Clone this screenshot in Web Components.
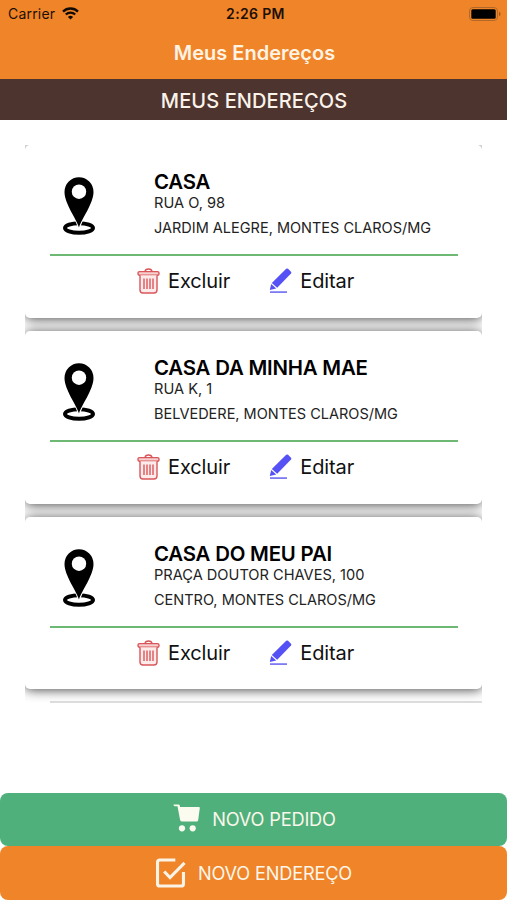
<!DOCTYPE html>
<html lang="pt-BR">
<head>
<meta charset="utf-8">
<title>Meus Endereços</title>
<style>
  body {
    margin: 0;
    background: #fff;
    font-family: Inter, "Liberation Sans", sans-serif;
  }
</style>
</head>
<body>
<address-app></address-app>

<script>
const templateStatusBar = document.createElement("template");
templateStatusBar.innerHTML = `
  <style>
    :host {
        display: grid;
        grid-template-columns: 1fr auto 1fr;
        align-items: center;
        height: 27px;
        padding: 0 6px 0 8px;
        font-size: 14px;
        line-height: 27px;
        color: #1c0f05;
    }
    .carrier {
        display: flex;
        align-items: center;
        gap: 7px;
        letter-spacing: 0.2px;
    }
    .time {
        padding-left: 2px;
        font-weight: 600;
        letter-spacing: 0.35px;
    }
    svg {
        display: block;
    }
    .battery {
        justify-self: end;
    }
  </style>
  <div class="carrier">
    <span>Carrier</span>
    <svg width="17" height="13" viewBox="0 0 17 13" fill="none" stroke="#120a03" stroke-width="2.3">
      <path d="M1 4.6a10.6 10.6 0 0 1 15 0"/>
      <path d="M3.8 7.5a6.7 6.7 0 0 1 9.4 0"/>
      <path d="M8.5 12.6L5.9 9.9a3.8 3.8 0 0 1 5.2 0z" fill="#120a03" stroke="none"/>
    </svg>
  </div>
  <span class="time">2:26 PM</span>
  <svg class="battery" width="32" height="14" viewBox="0 0 32 14">
    <rect x="0.5" y="0.5" width="28" height="13" rx="3.5" fill="none" stroke="#b0692b"/>
    <rect x="2.3" y="2.3" width="24.4" height="9.4" rx="1.5" fill="#000"/>
    <path d="M30 4.8q1.6 .6 1.6 2.2t-1.6 2.2z" fill="#9a5a24"/>
  </svg>
`;

class StatusBar extends HTMLElement {
  constructor() {
    super();
    this.attachShadow({ mode: "open" });
    this.shadowRoot.appendChild(templateStatusBar.content.cloneNode(true));
  }
}

const templateNavHeader = document.createElement("template");
templateNavHeader.innerHTML = `
  <style>
    :host {
        display: block;
        height: 79px;
        background: #f08428;
    }
    h1 {
        margin: 0;
        padding-left: 2px;
        font-size: 20px;
        font-weight: 600;
        line-height: 52px;
        text-align: center;
        color: #fff3e4;
    }
  </style>
  <status-bar></status-bar>
  <h1><slot></slot></h1>
`;

class NavHeader extends HTMLElement {
  constructor() {
    super();
    this.attachShadow({ mode: "open" });
    this.shadowRoot.appendChild(templateNavHeader.content.cloneNode(true));
  }
}

const templateSectionTitle = document.createElement("template");
templateSectionTitle.innerHTML = `
  <style>
    :host {
        display: block;
        height: 41px;
        background: #4e342e;
    }
    h2 {
        margin: 0;
        padding-left: 1px;
        font-size: 20px;
        font-weight: 550;
        line-height: 44px;
        letter-spacing: 0.1px;
        text-align: center;
        color: #fbf3ea;
    }
  </style>
  <h2><slot></slot></h2>
`;

class SectionTitle extends HTMLElement {
  constructor() {
    super();
    this.attachShadow({ mode: "open" });
    this.shadowRoot.appendChild(templateSectionTitle.content.cloneNode(true));
  }
}

const templateAddressCard = document.createElement("template");
templateAddressCard.innerHTML = `
  <style>
    :host {
        display: block;
        box-sizing: border-box;
        height: 172.6px;
        padding: 0 24px 0 25px;
        border-radius: 5px;
        background: #fff;
        box-shadow: 0 1px 12px rgba( 0, 0, 0, 0.72 );
        /* the shadow stops at the neighbouring cards */
        clip-path: inset(-13.2px 0);
    }
    .info {
        display: grid;
        grid-template-columns: 104px 1fr;
        box-sizing: border-box;
        height: 111px;
        padding-top: 26px;
        border-bottom: 2px solid #6db873;
    }
    .pin {
        display: block;
        margin: 5px 0 0 12px;
    }
    h3 {
        margin: 0;
        font-size: 20.4px;
        font-weight: 600;
        line-height: 22px;
        letter-spacing: -0.2px;
        color: #000;
        white-space: nowrap;
    }
    p {
        margin: 0;
        font-size: 14.6px;
        line-height: 20px;
        color: #222;
        white-space: nowrap;
    }
    p + p {
        margin-top: 5px;
        font-size: 14.5px;
    }
    .actions {
        display: flex;
        gap: 39px;
        padding: 11px 0 0 87px;
    }
    .action {
        display: flex;
        align-items: center;
        gap: 8px;
        font-size: 20px;
        line-height: 28px;
        letter-spacing: -0.1px;
        color: #111;
    }
    .action svg {
        display: block;
    }
  </style>
  <div class="info">
    <svg class="pin" width="34" height="60" viewBox="0 0 34 60">
      <ellipse cx="17" cy="52" rx="14" ry="4.800" fill="none" stroke="#000" stroke-width="4"/>
      <path d="M17 54L12 42h10z" fill="#fff"/>
      <path d="M17 51.500C14.500 43 2.500 27.500 2.500 16a14.500 14.800 0 0 1 29 0C31.500 27.500 19.500 43 17 51.500z"/>
      <circle cx="17" cy="15.700" r="7.200" fill="#fff"/>
    </svg>
    <div>
      <h3><slot name="name"></slot></h3>
      <p><slot name="street"></slot></p>
      <p><slot name="district"></slot></p>
    </div>
  </div>
  <div class="actions">
    <div class="action">
      <svg width="23" height="26" viewBox="0 0 23 26" fill="none" stroke="#d9575b" stroke-width="1.4">
        <path d="M8 3.600Q8.300 1 11.500 1t3.500 2.600"/>
        <rect x="1" y="3.600" width="21" height="3.600" rx="1.500" fill="#f6cfcf"/>
        <path d="M3 7.200V22q0 3 3 3h11q3 0 3-3V7.200" fill="#fdeaea"/>
        <path d="M7 10.500v10.500M10 10.500v10.500M13 10.500v10.500M16 10.500v10.500"/>
      </svg>
      <span>Excluir</span>
    </div>
    <div class="action">
      <svg width="23" height="26" viewBox="0 0 23 26" fill="#5551f5">
        <path d="M17.200 .8q1-.8 1.900 0l2.900 2.900q.8.900 0 1.800L8.200 19.800 2.800 15z"/>
        <path d="M2.200 16l5 4.600-6.400 1.400z"/>
        <rect x="1" y="23.200" width="17" height="1.800" fill="#7d7af2"/>
      </svg>
      <span>Editar</span>
    </div>
  </div>
`;

class AddressCard extends HTMLElement {
  constructor() {
    super();
    this.attachShadow({ mode: "open" });
    this.shadowRoot.appendChild(templateAddressCard.content.cloneNode(true));
  }
}

const templateAddressList = document.createElement("template");
templateAddressList.innerHTML = `
  <style>
    :host {
        display: flex;
        flex-direction: column;
        gap: 13.2px;
        box-sizing: border-box;
        height: 558px;
        margin: 25.2px 25px 0;
        overflow: hidden;
    }
    .end {
        flex: none;
        height: 2px;
        margin: -1.800px 0 0 25px;
        background: #dedede;
    }
    ::slotted(*) {
        flex: none;
    }
  </style>
  <slot></slot>
  <div class="end"></div>
`;

class AddressList extends HTMLElement {
  constructor() {
    super();
    this.attachShadow({ mode: "open" });
    this.shadowRoot.appendChild(templateAddressList.content.cloneNode(true));
  }
}

const templateBigButton = document.createElement("template");
templateBigButton.innerHTML = `
  <style>
    :host {
        display: flex;
        justify-content: center;
        align-items: center;
        gap: 12px;
        height: 53.7px;
        border-radius: 8px;
        background: var(--button-color);
        font-size: 18.200px;
        letter-spacing: -0.18px;
        color: #fbf6ea;
    }
  </style>
  <slot name="icon"></slot>
  <span><slot></slot></span>
`;

class BigButton extends HTMLElement {
  constructor() {
    super();
    this.attachShadow({ mode: "open" });
    this.shadowRoot.appendChild(templateBigButton.content.cloneNode(true));
  }
}

const templateAddressApp = document.createElement("template");
templateAddressApp.innerHTML = `
  <style>
    :host {
        display: flex;
        flex-direction: column;
        height: 900px;
        overflow: hidden;
    }
    footer {
        margin-top: auto;
    }
    .order {
        --button-color: #4fb07c;
    }
    .address {
        --button-color: #f08428;
    }
    svg {
        display: block;
    }
  </style>
  <nav-header>Meus Endereços</nav-header>
  <section-title>MEUS ENDEREÇOS</section-title>
  <address-list>
    <address-card>
      <span slot="name">CASA</span>
      <span slot="street">RUA O, 98</span>
      <span slot="district">JARDIM ALEGRE, MONTES CLAROS/MG</span>
    </address-card>
    <address-card>
      <span slot="name">CASA DA MINHA MAE</span>
      <span slot="street">RUA K, 1</span>
      <span slot="district">BELVEDERE, MONTES CLAROS/MG</span>
    </address-card>
    <address-card>
      <span slot="name">CASA DO MEU PAI</span>
      <span slot="street">PRAÇA DOUTOR CHAVES, 100</span>
      <span slot="district">CENTRO, MONTES CLAROS/MG</span>
    </address-card>
  </address-list>
  <footer>
    <big-button class="order">
      <svg slot="icon" width="29" height="30" viewBox="-1.500 1 29 30" fill="#fbfbef">
        <path d="M1 1.500h5.200q.8 0 1 .8l.4 1.700H26.500q.9 0 .8.900L25.700 17q-.2 1.500-1.600 1.500H9.200q-1.300 0-1.600-1.400L5 3.300H2.300Q1 3 1 1.500z"/>
        <circle cx="9.500" cy="25.300" r="3.100"/>
        <circle cx="20.200" cy="25.300" r="3.100"/>
      </svg>
      NOVO PEDIDO
    </big-button>
    <big-button class="address">
      <svg slot="icon" width="31" height="32" viewBox="0 0 32 32" fill="none" stroke="#fbf3e6" stroke-width="3.200">
        <path d="M21 2.600H5q-2.400 0-2.400 2.400v22q0 2.400 2.400 2.400h22q2.400 0 2.400-2.400V15"/>
        <path d="M9.500 14.500l6 6.200L30.500 5.500"/>
      </svg>
      NOVO ENDEREÇO
    </big-button>
  </footer>
`;

class AddressApp extends HTMLElement {
  constructor() {
    super();
    this.attachShadow({ mode: "open" });
    this.shadowRoot.appendChild(templateAddressApp.content.cloneNode(true));
  }
}

window.customElements.define("status-bar", StatusBar);
window.customElements.define("nav-header", NavHeader);
window.customElements.define("section-title", SectionTitle);
window.customElements.define("address-card", AddressCard);
window.customElements.define("address-list", AddressList);
window.customElements.define("big-button", BigButton);
window.customElements.define("address-app", AddressApp);
</script>
</body>
</html>
